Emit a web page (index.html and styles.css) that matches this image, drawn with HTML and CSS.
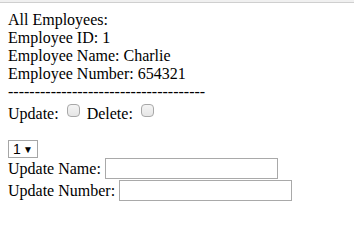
FILE: index.html
```html
<!DOCTYPE html>
<html>
<head>
<meta charset="utf-8">
<link rel="stylesheet" href="styles.css">
</head>
<body>
<div class="topbar"></div>
<main class="page">
  <div class="line">All Employees:</div>
  <div class="line">Employee ID: 1</div>
  <div class="line">Employee Name: Charlie</div>
  <div class="line">Employee Number: 654321</div>
  <div class="line">-------------------------------------</div>
  <div class="line">Update: <input type="checkbox" class="check"> Delete: <input type="checkbox" class="check"></div>
  <div class="line blank">&nbsp;</div>
  <div class="selrow">
    <span class="select"><span class="select-val">1</span><span class="select-arrow">&#9660;</span></span>
  </div>
  <div class="field"><span class="label">Update Name:</span><input type="text" class="text-input"></div>
  <div class="field"><span class="label">Update Number:</span><input type="text" class="text-input"></div>
</main>
</body>
</html>
```

FILE: styles.css
```css
html, body {
  margin: 0;
  padding: 0;
  background: #ffffff;
}
body {
  font-family: "Liberation Serif", "Times New Roman", serif;
  font-size: 16px;
  color: #000000;
}
.topbar {
  height: 2px;
  background: #f0f0f0;
  border-bottom: 1px solid #cfcfcf;
}
.page {
  padding: 8px;
}
.line {
  line-height: normal;
}
.check {
  -webkit-appearance: none;
  appearance: none;
  width: 13px;
  height: 13px;
  margin: 3px 3px 3px 4px;
  box-sizing: border-box;
  border: 1px solid #a8a8a8;
  border-radius: 4px;
  background: linear-gradient(#f4f4f4, #e6e6e6);
  vertical-align: -1px;
}
.selrow {
  height: 18px;
  margin-top: -1px;
}
.select {
  display: inline-flex;
  align-items: center;
  box-sizing: border-box;
  width: 30px;
  height: 18px;
  border: 1px solid #a6a6a6;
  padding: 0 0 0 4px;
  font-family: "Liberation Sans", Arial, sans-serif;
  font-size: 14px;
  vertical-align: top;
}
.select-val {
  flex: 1;
}
.select-arrow {
  font-size: 10px;
  margin-right: 4px;
}
.field {
  height: 21px;
  display: flex;
  align-items: center;
  gap: 4px;
}
.text-input {
  box-sizing: border-box;
  width: 173px;
  height: 21px;
  margin: 0;
  border: 1px solid #a9a9a9;
  padding: 1px 2px;
  font-family: "Liberation Sans", Arial, sans-serif;
  font-size: 13px;
  background: #fff;
  outline: none;
}
.field + .field {
  margin-top: 1px;
}
```
